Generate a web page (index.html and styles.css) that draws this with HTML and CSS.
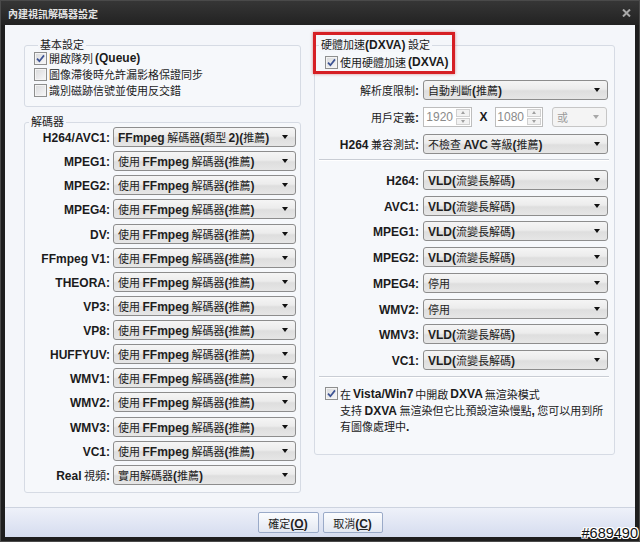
FILE: index.html
```html
<!DOCTYPE html>
<html lang="zh-Hant">
<head>
    <meta charset="UTF-8">
    <title>內建視訊解碼器設定</title>
    <link rel="stylesheet" href="styles.css">
</head>
<body>

<div class="window">
    <div class="titlebar">
        <span class="title">內建視訊解碼器設定</span>
        <svg class="close" width="9" height="8" viewBox="0 0 9 8">
            <path d="M1 0.5 L8 7.5 M8 0.5 L1 7.5" stroke="#a9a9a9" stroke-width="2"/>
        </svg>
    </div>

    <div class="client">
        <div class="main">
            <div class="col-left">
                <div class="group basic">
                    <div class="legend">基本設定</div>
                    <label class="check"><span class="box"><svg width="9" height="9" viewBox="0 0 9 9"><path d="M1 4.6 L3.4 7.2 L8 1.4" fill="none" stroke="#3d5393" stroke-width="1.7"/></svg></span>開啟隊列<b>(Queue)</b></label>
                    <label class="check"><span class="box"></span>圖像滯後時允許漏影格保證同步</label>
                    <label class="check"><span class="box"></span>識別磁跡信號並使用反交錯</label>
                </div>

                <div class="group decoders">
                    <div class="legend">解碼器</div>
                    <div class="form">
                        <span class="lbl"><b>H264/AVC1:</b></span>
                        <div class="combo"><span><b>FFmpeg</b> 解碼器<b>(</b>類型 <b>2)(</b>推薦<b>)</b></span></div>
                        <span class="lbl"><b>MPEG1:</b></span>
                        <div class="combo"><span>使用 <b>FFmpeg</b> 解碼器<b>(</b>推薦<b>)</b></span></div>
                        <span class="lbl"><b>MPEG2:</b></span>
                        <div class="combo"><span>使用 <b>FFmpeg</b> 解碼器<b>(</b>推薦<b>)</b></span></div>
                        <span class="lbl"><b>MPEG4:</b></span>
                        <div class="combo"><span>使用 <b>FFmpeg</b> 解碼器<b>(</b>推薦<b>)</b></span></div>
                        <span class="lbl"><b>DV:</b></span>
                        <div class="combo"><span>使用 <b>FFmpeg</b> 解碼器<b>(</b>推薦<b>)</b></span></div>
                        <span class="lbl"><b>FFmpeg V1:</b></span>
                        <div class="combo"><span>使用 <b>FFmpeg</b> 解碼器<b>(</b>推薦<b>)</b></span></div>
                        <span class="lbl"><b>THEORA:</b></span>
                        <div class="combo"><span>使用 <b>FFmpeg</b> 解碼器<b>(</b>推薦<b>)</b></span></div>
                        <span class="lbl"><b>VP3:</b></span>
                        <div class="combo"><span>使用 <b>FFmpeg</b> 解碼器<b>(</b>推薦<b>)</b></span></div>
                        <span class="lbl"><b>VP8:</b></span>
                        <div class="combo"><span>使用 <b>FFmpeg</b> 解碼器<b>(</b>推薦<b>)</b></span></div>
                        <span class="lbl"><b>HUFFYUV:</b></span>
                        <div class="combo"><span>使用 <b>FFmpeg</b> 解碼器<b>(</b>推薦<b>)</b></span></div>
                        <span class="lbl"><b>WMV1:</b></span>
                        <div class="combo"><span>使用 <b>FFmpeg</b> 解碼器<b>(</b>推薦<b>)</b></span></div>
                        <span class="lbl"><b>WMV2:</b></span>
                        <div class="combo"><span>使用 <b>FFmpeg</b> 解碼器<b>(</b>推薦<b>)</b></span></div>
                        <span class="lbl"><b>WMV3:</b></span>
                        <div class="combo"><span>使用 <b>FFmpeg</b> 解碼器<b>(</b>推薦<b>)</b></span></div>
                        <span class="lbl"><b>VC1:</b></span>
                        <div class="combo"><span>使用 <b>FFmpeg</b> 解碼器<b>(</b>推薦<b>)</b></span></div>
                        <span class="lbl"><b>Real</b> 視頻<b>:</b></span>
                        <div class="combo"><span>實用解碼器<b>(</b>推薦<b>)</b></span></div>
                    </div>
                </div>
            </div>

            <div class="col-right">
                <div class="group dxva">
                    <div class="legend">硬體加速<b>(DXVA)</b> 設定</div>
                    <label class="check"><span class="box"><svg width="9" height="9" viewBox="0 0 9 9"><path d="M1 4.6 L3.4 7.2 L8 1.4" fill="none" stroke="#3d5393" stroke-width="1.7"/></svg></span>使用硬體加速 <b>(DXVA)</b></label>

                    <div class="form form-top">
                        <span class="lbl">解析度限制<b>:</b></span>
                        <div class="combo"><span>自動判斷<b>(</b>推薦<b>)</b></span></div>
                        <span class="lbl">用戶定義<b>:</b></span>
                        <div class="custom">
                            <div class="spin"><span class="val">1920</span><span class="btns"><i class="up"></i><i class="down"></i></span></div>
                            <b class="times">X</b>
                            <div class="spin"><span class="val">1080</span><span class="btns"><i class="up"></i><i class="down"></i></span></div>
                            <div class="combo disabled"><span>或</span></div>
                        </div>
                        <span class="lbl"><b>H264</b> 兼容測試<b>:</b></span>
                        <div class="combo"><span>不檢查 <b>AVC</b> 等級<b>(</b>推薦<b>)</b></span></div>
                    </div>

                    <div class="sep"></div>

                    <div class="form form-codecs">
                        <span class="lbl"><b>H264:</b></span>
                        <div class="combo"><span><b>VLD(</b>流變長解碼<b>)</b></span></div>
                        <span class="lbl"><b>AVC1:</b></span>
                        <div class="combo"><span><b>VLD(</b>流變長解碼<b>)</b></span></div>
                        <span class="lbl"><b>MPEG1:</b></span>
                        <div class="combo"><span><b>VLD(</b>流變長解碼<b>)</b></span></div>
                        <span class="lbl"><b>MPEG2:</b></span>
                        <div class="combo"><span><b>VLD(</b>流變長解碼<b>)</b></span></div>
                        <span class="lbl"><b>MPEG4:</b></span>
                        <div class="combo"><span>停用</span></div>
                        <span class="lbl"><b>WMV2:</b></span>
                        <div class="combo"><span>停用</span></div>
                        <span class="lbl"><b>WMV3:</b></span>
                        <div class="combo"><span><b>VLD(</b>流變長解碼<b>)</b></span></div>
                        <span class="lbl"><b>VC1:</b></span>
                        <div class="combo"><span><b>VLD(</b>流變長解碼<b>)</b></span></div>
                    </div>

                    <div class="sep sep-low"></div>

                    <label class="check"><span class="box"><svg width="9" height="9" viewBox="0 0 9 9"><path d="M1 4.6 L3.4 7.2 L8 1.4" fill="none" stroke="#3d5393" stroke-width="1.7"/></svg></span>在 <b>Vista/Win7</b> 中開啟 <b>DXVA</b> 無渲染模式</label>
                    <p class="desc">支持 <b>DXVA</b> 無渲染但它比預設渲染慢點<b>,</b> 您可以用到所<br>有圖像處理中<b>.</b></p>
                </div>
            </div>
        </div>

        <div class="footer">
            <button class="btn ok">確定<b>(<u>O</u>)</b></button>
            <button class="btn">取消<b>(<u>C</u>)</b></button>
        </div>
    </div>

    <div class="highlight"></div>
    <div class="watermark">#689490</div>
</div>

</body>
</html>
```

FILE: styles.css
```css
body {
    margin: 0;
    background: #1c1c1c;
    font-family: "Noto Sans CJK TC", "Liberation Sans", sans-serif;
    font-size: 11px;
    color: #1b1b1b;
}
b {
    font-family: "Liberation Sans", "Noto Sans CJK TC", sans-serif;
    font-size: 12px;
    font-weight: bold;
}
.window {
    position: relative;
    width: 640px;
    height: 542px;
    box-sizing: border-box;
    border: 1px solid #4a4a4a;
    background: #1e1e1e;
    display: flex;
    flex-direction: column;
    overflow: hidden;
}
.titlebar {
    height: 24px;
    flex: none;
    display: flex;
    align-items: center;
    justify-content: space-between;
    padding: 0 8px 0 7px;
    background: linear-gradient(#363636, #222);
}
.title {
    font-size: 10px;
    font-weight: bold;
    color: #e2e2e2;
}
.client {
    flex: 1;
    margin: 0 4px 4px;
    background: #f4f6fa;
    display: flex;
    flex-direction: column;
}
.main {
    flex: 1;
    display: flex;
    justify-content: space-between;
    padding: 0 20px 0 19px;
}
.col-left {
    width: 277px;
    padding-top: 20px;
}
.col-right {
    width: 301px;
    padding-top: 20px;
}

/* group boxes */
.group {
    border: 1px solid #d6dbe4;
    border-radius: 3px;
    background: #f6f8fb;
}
.legend {
    width: fit-content;
    margin: -8px 0 0 4px;
    padding: 0 2px;
    line-height: 13px;
    background: #f4f6fa;
}
.basic {
    padding: 0 0 9px 9px;
}
.basic .check + .check {
    margin-top: 2px;
}
.decoders {
    margin-top: 15px;
    padding-bottom: 7px;
}
.decoders .legend {
    margin-bottom: -1px;
}
.dxva {
    padding-bottom: 19px;
}
.dxva .legend {
    margin-bottom: 3px;
}
.dxva .check {
    padding-left: 10px;
}

/* checkboxes */
.check {
    display: flex;
    align-items: center;
    gap: 2px;
    height: 14px;
    line-height: 14px;
    white-space: nowrap;
}
.box {
    width: 13px;
    height: 13px;
    box-sizing: border-box;
    flex: none;
    border: 1px solid #8e8f8f;
    background: linear-gradient(135deg, #d8d9db, #f8f8f9);
    box-shadow: inset 0 0 0 1px #f4f4f4;
    display: flex;
    align-items: center;
    justify-content: center;
}

/* label / control grid */
.form {
    display: grid;
    grid-template-columns: 85px 1fr;
    grid-auto-rows: 20px;
    column-gap: 3px;
    row-gap: 4.14px;
    align-items: center;
    padding-right: 4px;
}
.form-top {
    grid-template-columns: 104px 1fr;
    column-gap: 4px;
    row-gap: 7px;
    margin-top: 11px;
    padding-right: 6px;
}
.form-codecs {
    grid-template-columns: 104px 1fr;
    column-gap: 4px;
    row-gap: 5.71px;
    padding-right: 6px;
}
.lbl {
    text-align: right;
    white-space: nowrap;
}
.combo {
    height: 20px;
    box-sizing: border-box;
    border: 1px solid #8d8d8d;
    border-radius: 3px;
    background: linear-gradient(#f5f5f5, #ececec 45%, #dedede 55%, #e6e6e6);
    display: flex;
    align-items: center;
    justify-content: space-between;
    padding: 0 7px 0 4px;
    white-space: nowrap;
    color: #1e1e1e;
}
.combo::after {
    content: "";
    border-left: 3.5px solid transparent;
    border-right: 3.5px solid transparent;
    border-top: 4px solid #111;
}
.combo.disabled {
    width: 55px;
    margin-left: 9px;
    border-color: #c6c6c6;
    background: #f4f4f4;
    color: #9a9a9a;
}
.combo.disabled::after {
    border-top-color: #a8a8a8;
}

/* custom resolution */
.custom {
    display: flex;
    align-items: center;
    height: 20px;
}
.spin {
    width: 49px;
    height: 20px;
    box-sizing: border-box;
    border: 1px solid #bdbdbd;
    background: #fff;
    display: flex;
    align-items: center;
    padding: 1px;
}
.spin + .times + .spin {
    width: 48px;
}
.val {
    flex: 1;
    text-align: right;
    padding-right: 3px;
    color: #8a8a8a;
    font-family: "Liberation Sans", sans-serif;
    font-size: 12px;
}
.btns {
    width: 14px;
    height: 16px;
    display: flex;
    flex-direction: column;
    gap: 1px;
}
.btns i {
    flex: 1;
    border: 1px solid #d0d0d0;
    background: #f2f2f2;
    display: flex;
    align-items: center;
    justify-content: center;
}
.btns .up::before {
    content: "";
    border-left: 2.5px solid transparent;
    border-right: 2.5px solid transparent;
    border-bottom: 3px solid #a0a0a0;
}
.btns .down::before {
    content: "";
    border-left: 2.5px solid transparent;
    border-right: 2.5px solid transparent;
    border-top: 3px solid #a0a0a0;
}
.times {
    width: 23px;
    text-align: center;
}

.sep {
    margin: 5px 5px 9px 4px;
    border-top: 1px solid #c9cdd4;
    border-bottom: 1px solid #fff;
}
.sep-low {
    margin: 6px 5px 9px 4px;
}
.desc {
    margin: 2px 0 0;
    padding-left: 25px;
    line-height: 15px;
    white-space: nowrap;
}

/* footer */
.footer {
    height: 30px;
    flex: none;
    box-sizing: border-box;
    border-top: 1px solid #cdd3df;
    background: linear-gradient(#eef1f9, #d5dcef);
    display: flex;
    justify-content: center;
    align-items: center;
    gap: 4px;
}
.btn {
    width: 61px;
    height: 21px;
    padding: 0;
    border: 1px solid #9aaac8;
    border-radius: 2px;
    background: linear-gradient(#fbfcfe, #e3e8f2);
    font-family: "Noto Sans CJK TC", sans-serif;
    font-size: 11px;
    color: #222;
}
.btn + .btn {
    width: 60px;
}

/* overlays */
.highlight {
    position: absolute;
    left: 312px;
    top: 31px;
    width: 142px;
    height: 42px;
    box-sizing: border-box;
    border: 3px solid #d61f24;
    box-shadow: 0 0 3px rgba(180, 0, 0, 0.45);
}
.watermark {
    position: absolute;
    right: 1px;
    bottom: 0;
    font-family: "Liberation Sans", sans-serif;
    font-size: 14.5px;
    line-height: 16px;
    color: #111;
    text-shadow: 1px 0 #fff, -1px 0 #fff, 0 1px #fff, 0 -1px #fff,
        1px 1px #fff, -1px -1px #fff, 1px -1px #fff, -1px 1px #fff;
}
```
